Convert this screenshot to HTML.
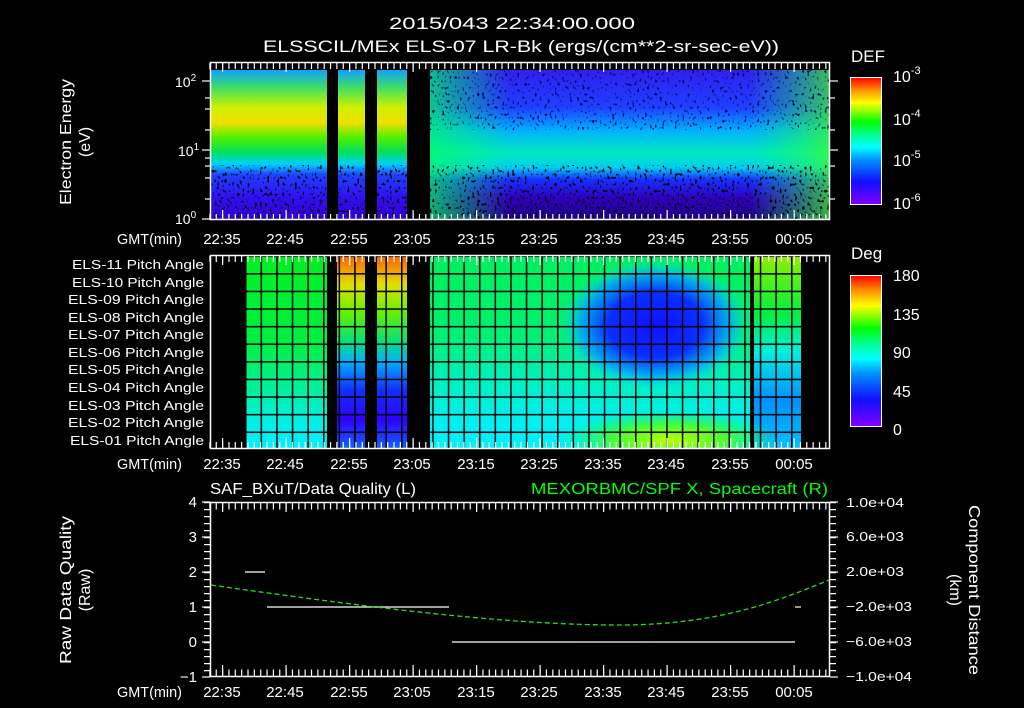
<!DOCTYPE html>
<html><head><meta charset="utf-8"><style>
html,body{margin:0;padding:0;background:#000;}
svg{display:block;}
text{font-family:"Liberation Sans",sans-serif;fill:#fff;}
</style></head><body>
<svg width="1024" height="708" viewBox="0 0 1024 708" xmlns="http://www.w3.org/2000/svg">
<defs>
<linearGradient id="rb" x1="0" y1="1" x2="0" y2="0">
<stop offset="0" stop-color="#8000ff"/><stop offset="0.18" stop-color="#1010ff"/><stop offset="0.35" stop-color="#0090ff"/><stop offset="0.45" stop-color="#00ffff"/><stop offset="0.55" stop-color="#00ff90"/><stop offset="0.65" stop-color="#00ff00"/><stop offset="0.8" stop-color="#ffff00"/><stop offset="0.9" stop-color="#ff9000"/><stop offset="1" stop-color="#ff0000"/>
</linearGradient>
<linearGradient id="s1L" x1="0" y1="0" x2="0" y2="1">
<stop offset="0" stop-color="#10a0ff"/><stop offset="0.12" stop-color="#40e060"/><stop offset="0.25" stop-color="#d0f000"/><stop offset="0.35" stop-color="#f0e000"/><stop offset="0.45" stop-color="#50f000"/><stop offset="0.55" stop-color="#00e060"/><stop offset="0.63" stop-color="#00d0ff"/><stop offset="0.7" stop-color="#2040ff"/><stop offset="0.85" stop-color="#3010f0"/><stop offset="1" stop-color="#3000d0"/>
</linearGradient>
<linearGradient id="s1R" x1="0" y1="0" x2="0" y2="1">
<stop offset="0" stop-color="#3020f0"/><stop offset="0.25" stop-color="#2040ff"/><stop offset="0.4" stop-color="#00b0ff"/><stop offset="0.55" stop-color="#00e8c0"/><stop offset="0.65" stop-color="#00d0f0"/><stop offset="0.73" stop-color="#1830ff"/><stop offset="0.85" stop-color="#3000c0"/><stop offset="1" stop-color="#200080"/>
</linearGradient>
<linearGradient id="s1G" x1="0" y1="0" x2="1" y2="0">
<stop offset="0" stop-color="#00ff60" stop-opacity="0.7"/><stop offset="0.2" stop-color="#00ff60" stop-opacity="0"/><stop offset="0.8" stop-color="#00ff60" stop-opacity="0"/><stop offset="1" stop-color="#40ff20" stop-opacity="0.7"/>
</linearGradient>
<filter id="noise" x="0" y="0" width="1" height="1">
<feTurbulence type="fractalNoise" baseFrequency="0.4 0.3" numOctaves="1" seed="3"/>
<feColorMatrix values="0 0 0 0 0  0 0 0 0 0  0 0 0 0 0  9 0 0 0 -5.3"/>
</filter>
<filter id="noise2" x="0" y="0" width="1" height="1">
<feTurbulence type="fractalNoise" baseFrequency="0.4 0.3" numOctaves="1" seed="7"/>
<feColorMatrix values="0 0 0 0 0  0 0 0 0 0  0 0 0 0 0.1  8 0 0 0 -4.8"/>
</filter>
<linearGradient id="p2L" x1="0" y1="0" x2="0" y2="1">
<stop offset="0" stop-color="#00f020"/><stop offset="0.45" stop-color="#00f040"/><stop offset="0.7" stop-color="#00f0a0"/><stop offset="0.85" stop-color="#00f0e0"/><stop offset="1" stop-color="#00f0ff"/>
</linearGradient>
<linearGradient id="p2S" x1="0" y1="0" x2="0" y2="1">
<stop offset="0" stop-color="#ff6000"/><stop offset="0.15" stop-color="#e0e000"/><stop offset="0.3" stop-color="#60f000"/><stop offset="0.45" stop-color="#00e080"/><stop offset="0.55" stop-color="#00b0ff"/><stop offset="0.7" stop-color="#1030ff"/><stop offset="0.85" stop-color="#3000ff"/><stop offset="1" stop-color="#1060ff"/>
</linearGradient>
<linearGradient id="p2R" x1="0" y1="0" x2="0" y2="1">
<stop offset="0" stop-color="#00f060"/><stop offset="0.4" stop-color="#00f070"/><stop offset="0.65" stop-color="#00f0c0"/><stop offset="0.85" stop-color="#00f0f0"/><stop offset="1" stop-color="#00f0ff"/>
</linearGradient>
<radialGradient id="blue" cx="0.5" cy="0.5" r="0.5">
<stop offset="0" stop-color="#1010ff"/><stop offset="0.5" stop-color="#0830ff"/><stop offset="0.78" stop-color="#00a0ff" stop-opacity="0.85"/><stop offset="1" stop-color="#00e0ff" stop-opacity="0"/>
</radialGradient>
<radialGradient id="yel" cx="0.5" cy="0.5" r="0.5">
<stop offset="0" stop-color="#c0ff00"/><stop offset="0.5" stop-color="#60ff00" stop-opacity="0.8"/><stop offset="1" stop-color="#00ff40" stop-opacity="0"/>
</radialGradient>
<linearGradient id="p2E" x1="0" y1="0" x2="0" y2="1">
<stop offset="0" stop-color="#90f000"/><stop offset="0.3" stop-color="#00f040"/><stop offset="0.5" stop-color="#00f0e0"/><stop offset="0.75" stop-color="#0090ff"/><stop offset="1" stop-color="#00c0ff"/>
</linearGradient>
<pattern id="vgrid" x="245" y="0" width="15.6" height="10" patternUnits="userSpaceOnUse"><rect x="0" y="0" width="1.5" height="10" fill="#000"/></pattern>
<pattern id="hgrid" x="0" y="255.5" width="10" height="17.6" patternUnits="userSpaceOnUse"><rect x="0" y="0" width="10" height="1.5" fill="#000"/></pattern>
<clipPath id="c2"><rect x="211" y="256" width="618" height="192"/></clipPath>
</defs>

<text x="389" y="29" font-size="17" textLength="246" lengthAdjust="spacingAndGlyphs">2015/043 22:34:00.000</text>
<text x="263" y="52" font-size="17" textLength="516" lengthAdjust="spacingAndGlyphs">ELSSCIL/MEx ELS-07 LR-Bk  (ergs/(cm**2-sr-sec-eV))</text>

<rect x="211" y="70" width="618" height="150" fill="url(#s1L)"/>
<rect x="430" y="70" width="399" height="150" fill="url(#s1R)"/>
<rect x="430" y="70" width="399" height="150" fill="url(#s1G)"/>
<rect x="211" y="165" width="618" height="55" filter="url(#noise)"/>
<rect x="430" y="70" width="399" height="60" filter="url(#noise2)"/>
<rect x="327" y="70" width="11" height="150" fill="#000"/>
<rect x="365" y="70" width="12" height="150" fill="#000"/>
<rect x="407" y="70" width="23" height="150" fill="#000"/>
<g stroke="#fff" stroke-width="1.2" fill="none">
<line x1="209.3" y1="66" x2="829" y2="66" stroke-width="6" stroke-dasharray="1.2 5.15"/>
<line x1="222" y1="67" x2="829" y2="67" stroke-width="10" stroke-dasharray="1.2 62.3"/>
<line x1="209.3" y1="217" x2="829" y2="217" stroke-width="6" stroke-dasharray="1.2 5.15"/>
<line x1="222" y1="215" x2="829" y2="215" stroke-width="10" stroke-dasharray="1.2 62.3"/>
</g>
<rect x="210.5" y="62.5" width="619" height="157" fill="none" stroke="#fff" stroke-width="1.5"/>
<g stroke="#fff" stroke-width="1.2">
<line x1="202" y1="81" x2="210" y2="81"/><line x1="202" y1="150" x2="210" y2="150"/><line x1="202" y1="219" x2="210" y2="219"/>
<line x1="205" y1="98" x2="210" y2="98"/><line x1="205" y1="109" x2="210" y2="109"/><line x1="205" y1="130" x2="210" y2="130"/><line x1="205" y1="158" x2="210" y2="158"/><line x1="205" y1="166" x2="210" y2="166"/><line x1="205" y1="178" x2="210" y2="178"/><line x1="205" y1="199" x2="210" y2="199"/>
<line x1="830" y1="81" x2="838" y2="81"/><line x1="830" y1="150" x2="838" y2="150"/><line x1="830" y1="98" x2="835" y2="98"/><line x1="830" y1="130" x2="835" y2="130"/><line x1="830" y1="166" x2="835" y2="166"/><line x1="830" y1="199" x2="835" y2="199"/>
</g>
<text x="175" y="87" font-size="14">10<tspan font-size="10" dy="-6">2</tspan></text>
<text x="178" y="156" font-size="14">10<tspan font-size="10" dy="-6">1</tspan></text>
<text x="175" y="224" font-size="14">10<tspan font-size="10" dy="-6">0</tspan></text>
<text transform="translate(71,142) rotate(-90)" x="-63" font-size="16" textLength="126" lengthAdjust="spacingAndGlyphs">Electron Energy</text>
<text transform="translate(90,142) rotate(-90)" text-anchor="middle" font-size="16">(eV)</text>

<text x="851" y="62" font-size="17">DEF</text>
<rect x="850.5" y="77.5" width="31" height="127" fill="url(#rb)" stroke="#fff"/>
<text x="893" y="82" font-size="16">10<tspan font-size="11" dy="-8">-3</tspan></text>
<text x="893" y="125" font-size="16">10<tspan font-size="11" dy="-8">-4</tspan></text>
<text x="893" y="166" font-size="16">10<tspan font-size="11" dy="-8">-5</tspan></text>
<text x="893" y="209" font-size="16">10<tspan font-size="11" dy="-8">-6</tspan></text>

<g font-size="15">
<text x="117" y="244" textLength="65" lengthAdjust="spacingAndGlyphs">GMT(min)</text>
<text x="117" y="469" textLength="65" lengthAdjust="spacingAndGlyphs">GMT(min)</text>
<text x="117" y="697" textLength="65" lengthAdjust="spacingAndGlyphs">GMT(min)</text>
</g>
<g font-size="15" text-anchor="middle">
<text x="222" y="244">22:35</text><text x="285" y="244">22:45</text><text x="349" y="244">22:55</text><text x="412" y="244">23:05</text><text x="476" y="244">23:15</text><text x="539" y="244">23:25</text><text x="603" y="244">23:35</text><text x="666" y="244">23:45</text><text x="730" y="244">23:55</text><text x="794" y="244">00:05</text>
<text x="222" y="469">22:35</text><text x="285" y="469">22:45</text><text x="349" y="469">22:55</text><text x="412" y="469">23:05</text><text x="476" y="469">23:15</text><text x="539" y="469">23:25</text><text x="603" y="469">23:35</text><text x="666" y="469">23:45</text><text x="730" y="469">23:55</text><text x="794" y="469">00:05</text>
<text x="222" y="697">22:35</text><text x="285" y="697">22:45</text><text x="349" y="697">22:55</text><text x="412" y="697">23:05</text><text x="476" y="697">23:15</text><text x="539" y="697">23:25</text><text x="603" y="697">23:35</text><text x="666" y="697">23:45</text><text x="730" y="697">23:55</text><text x="794" y="697">00:05</text>
</g>

<g clip-path="url(#c2)">
<rect x="245" y="256" width="82" height="192" fill="url(#p2L)"/>
<rect x="337" y="256" width="28" height="192" fill="url(#p2S)"/>
<rect x="377" y="256" width="30" height="192" fill="url(#p2S)"/>
<rect x="430" y="256" width="322" height="192" fill="url(#p2R)"/>
<rect x="752" y="256" width="49" height="192" fill="url(#p2E)"/>
<ellipse cx="655" cy="325" rx="95" ry="65" fill="url(#blue)"/>
<ellipse cx="670" cy="440" rx="110" ry="30" fill="url(#yel)"/>
</g>
<rect x="245" y="256" width="556" height="192" fill="url(#vgrid)"/>
<rect x="245" y="256" width="556" height="192" fill="url(#hgrid)"/>
<rect x="750" y="256" width="4" height="192" fill="#000"/>
<g stroke="#fff" stroke-width="1.2" fill="none">
<line x1="209.3" y1="259" x2="829" y2="259" stroke-width="6" stroke-dasharray="1.2 5.15"/>
<line x1="222" y1="260" x2="829" y2="260" stroke-width="10" stroke-dasharray="1.2 62.3"/>
<line x1="209.3" y1="445" x2="829" y2="445" stroke-width="6" stroke-dasharray="1.2 5.15"/>
<line x1="222" y1="443" x2="829" y2="443" stroke-width="10" stroke-dasharray="1.2 62.3"/>
</g>
<rect x="210.5" y="255.5" width="619" height="193" fill="none" stroke="#fff" stroke-width="1.5"/>
<g font-size="13">
<text x="72" y="269" textLength="132" lengthAdjust="spacingAndGlyphs">ELS-11 Pitch Angle</text>
<text x="72" y="287" textLength="132" lengthAdjust="spacingAndGlyphs">ELS-10 Pitch Angle</text>
<text x="68" y="304" textLength="136" lengthAdjust="spacingAndGlyphs">ELS-09 Pitch Angle</text>
<text x="68" y="322" textLength="136" lengthAdjust="spacingAndGlyphs">ELS-08 Pitch Angle</text>
<text x="68" y="339" textLength="136" lengthAdjust="spacingAndGlyphs">ELS-07 Pitch Angle</text>
<text x="68" y="357" textLength="136" lengthAdjust="spacingAndGlyphs">ELS-06 Pitch Angle</text>
<text x="68" y="374" textLength="136" lengthAdjust="spacingAndGlyphs">ELS-05 Pitch Angle</text>
<text x="68" y="392" textLength="136" lengthAdjust="spacingAndGlyphs">ELS-04 Pitch Angle</text>
<text x="68" y="410" textLength="136" lengthAdjust="spacingAndGlyphs">ELS-03 Pitch Angle</text>
<text x="68" y="427" textLength="136" lengthAdjust="spacingAndGlyphs">ELS-02 Pitch Angle</text>
<text x="70" y="445" textLength="134" lengthAdjust="spacingAndGlyphs">ELS-01 Pitch Angle</text>
</g>

<text x="851" y="259" font-size="17">Deg</text>
<rect x="850.5" y="275.5" width="31" height="151" fill="url(#rb)" stroke="#fff"/>
<g font-size="16">
<text x="893" y="281">180</text><text x="893" y="320">135</text><text x="893" y="358">90</text><text x="893" y="397">45</text><text x="893" y="435">0</text>
</g>

<text x="210" y="494" font-size="16" textLength="206" lengthAdjust="spacingAndGlyphs">SAF_BXuT/Data Quality (L)</text>
<text x="531" y="494" font-size="16" textLength="297" lengthAdjust="spacingAndGlyphs" style="fill:#00ff00">MEXORBMC/SPF X, Spacecraft (R)</text>
<g stroke="#fff" stroke-width="1.2" fill="none">
<line x1="209.3" y1="506" x2="829" y2="506" stroke-width="7" stroke-dasharray="1.2 5.15"/>
<line x1="222" y1="507" x2="829" y2="507" stroke-width="10" stroke-dasharray="1.2 62.3"/>
<line x1="209.3" y1="673" x2="829" y2="673" stroke-width="7" stroke-dasharray="1.2 5.15"/>
<line x1="222" y1="671" x2="829" y2="671" stroke-width="12" stroke-dasharray="1.2 62.3"/>
<line x1="207" y1="502" x2="207" y2="677" stroke-width="6" stroke-dasharray="1.2 5.8"/>
<line x1="833" y1="502" x2="833" y2="677" stroke-width="6" stroke-dasharray="1.2 5.8"/>
</g>
<rect x="210.5" y="502.5" width="619" height="174" fill="none" stroke="#fff" stroke-width="1.5"/>
<g stroke="#fff" stroke-width="1.2">
<line x1="202" y1="502" x2="210" y2="502"/><line x1="202" y1="537" x2="210" y2="537"/><line x1="202" y1="572" x2="210" y2="572"/><line x1="202" y1="607" x2="210" y2="607"/><line x1="202" y1="642" x2="210" y2="642"/><line x1="202" y1="677" x2="210" y2="677"/>
<line x1="830" y1="502" x2="838" y2="502"/><line x1="830" y1="537" x2="838" y2="537"/><line x1="830" y1="572" x2="838" y2="572"/><line x1="830" y1="607" x2="838" y2="607"/><line x1="830" y1="642" x2="838" y2="642"/><line x1="830" y1="677" x2="838" y2="677"/>
</g>
<g font-size="15" text-anchor="end">
<text x="197" y="507">4</text><text x="197" y="542">3</text><text x="197" y="577">2</text><text x="197" y="612">1</text><text x="197" y="647">0</text><text x="197" y="682">−1</text>
</g>
<g font-size="13">
<text x="846" y="507" textLength="58" lengthAdjust="spacingAndGlyphs">1.0e+04</text><text x="846" y="541" textLength="58" lengthAdjust="spacingAndGlyphs">6.0e+03</text><text x="846" y="576" textLength="58" lengthAdjust="spacingAndGlyphs">2.0e+03</text><text x="846" y="611" textLength="66" lengthAdjust="spacingAndGlyphs">−2.0e+03</text><text x="846" y="646" textLength="66" lengthAdjust="spacingAndGlyphs">−6.0e+03</text><text x="846" y="681" textLength="66" lengthAdjust="spacingAndGlyphs">−1.0e+04</text>
</g>
<text transform="translate(71,590) rotate(-90)" x="-74" font-size="16" textLength="148" lengthAdjust="spacingAndGlyphs">Raw Data Quality</text>
<text transform="translate(90,590) rotate(-90)" text-anchor="middle" font-size="16">(Raw)</text>
<text transform="translate(969,590) rotate(90)" x="-85" font-size="16" textLength="170" lengthAdjust="spacingAndGlyphs">Component Distance</text>
<text transform="translate(950,590) rotate(90)" text-anchor="middle" font-size="16">(km)</text>
<g stroke="#fff" stroke-width="1.2">
<line x1="245" y1="572" x2="265" y2="572"/>
<line x1="267" y1="607" x2="449" y2="607"/>
<line x1="452" y1="642" x2="795" y2="642"/>
<line x1="795" y1="607" x2="801" y2="607"/>
</g>
<path d="M211,585 C 400,612 520,625 620,625 C 720,625 780,600 829,580" fill="none" stroke="#20e020" stroke-width="1.3" stroke-dasharray="5,3"/>
</svg>
</body></html>
